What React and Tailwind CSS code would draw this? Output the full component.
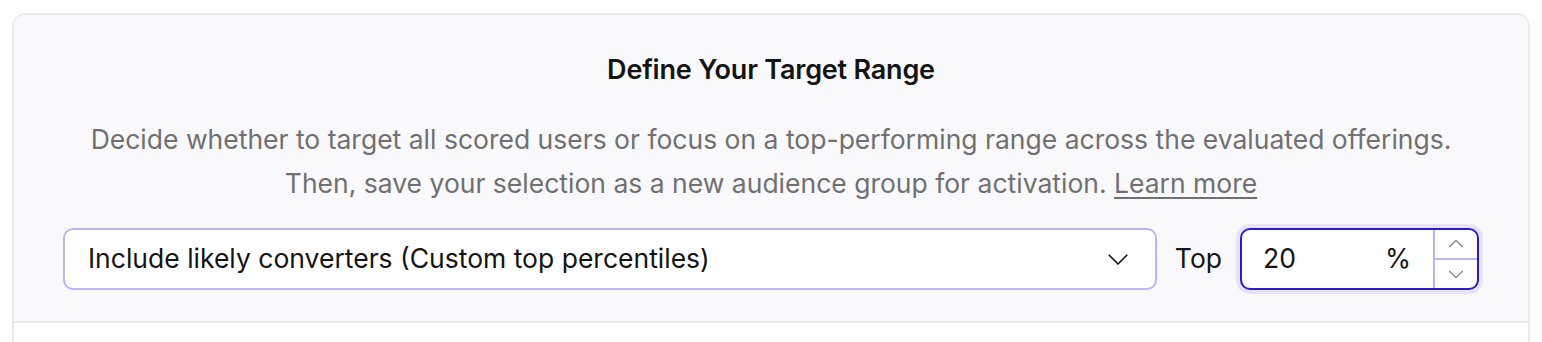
import React from 'react';

const Chevron = ({ dir = 'down', className, width = 1.6 }) => (
  <svg viewBox="0 0 24 24" className={className} fill="none" stroke="currentColor" strokeWidth={width} strokeLinecap="round" strokeLinejoin="round">
    {dir === 'down' ? <path d="M5 9l7 7 7-7" /> : <path d="M5 15l7-7 7 7" />}
  </svg>
);

const App = () => {
  return (
    <div className="min-h-[342px] bg-white pt-[13px] px-[12px] font-['Inter',sans-serif]">
      <div className="rounded-t-[14px] border-x-2 border-t-2 border-[#ebebeb] h-[329px] flex flex-col">
        {/* --- target range section --- */}
        <section className="bg-[#f9f9fb] rounded-t-[12px] border-b-2 border-[#ebebeb] px-[49px] pt-[38px] pb-[31px]">
          <h2 className="text-center text-[27px] leading-[34px] font-semibold text-[#141414] tracking-[-0.2px]">
            Define Your Target Range
          </h2>
          <p className="mt-[30px] text-center text-[26.5px] leading-[44px] text-[#707070]">
            Decide whether to target all scored users or focus on a top-performing range across the evaluated offerings.
            <br />
            Then, save your selection as a new audience group for activation.{' '}
            <a href="#" className="underline underline-offset-[4px] decoration-[1.5px]">Learn more</a>
          </p>

          <div className="mt-[23px] flex items-center gap-[18px]">
            <button className="flex-1 h-[62px] flex items-center justify-between bg-white border-2 border-[#c0b3f5] rounded-[10px] pl-[23px] pr-[22px] text-left">
              <span className="text-[26.5px] text-[#141414]">Include likely converters (Custom top percentiles)</span>
              <Chevron className="w-[30px] h-[30px] text-[#1a1a1a]" width={1.4} />
            </button>
            <span className="text-[26.5px] text-[#141414]">Top</span>
            <div className="w-[239px] h-[62px] flex bg-white border-2 border-[#2a1bd1] rounded-[10px] ring-4 ring-[#e7e4f8]">
              <div className="flex-1 flex items-center justify-between pl-[21px] pr-[22px]">
                <span className="text-[26.5px] text-[#141414]">20</span>
                <span className="text-[26.5px] text-[#141414]">%</span>
              </div>
              <div className="w-[44px] flex flex-col border-l-2 border-[#c0b3f5]">
                <div className="flex-1 flex items-center justify-center border-b-2 border-[#c0b3f5]">
                  <Chevron dir="up" className="w-[22px] h-[22px] text-[#777]" width={1.2} />
                </div>
                <div className="flex-1 flex items-center justify-center">
                  <Chevron className="w-[22px] h-[22px] text-[#777]" width={1.2} />
                </div>
              </div>
            </div>
          </div>
        </section>
        <div className="flex-1 bg-white" />
      </div>
    </div>
  );
};

export default App;
